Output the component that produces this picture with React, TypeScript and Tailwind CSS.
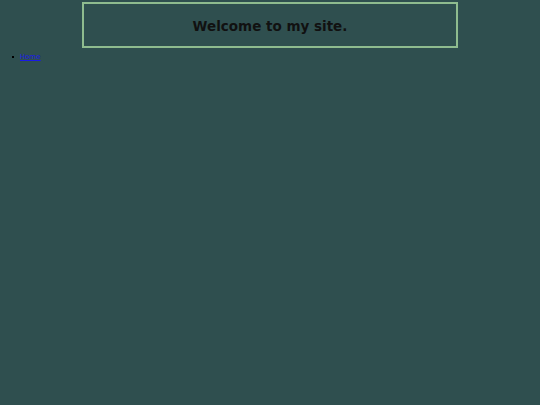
export default function App() {
  return (
    <div className="min-h-[405px] bg-[#2f4f4f] pt-[2px] font-['DejaVu_Sans',sans-serif]">
      <div className="mx-auto flex h-[46px] w-[376px] items-center justify-center border-2 border-[#8fbc8f] pt-[2px]">
        <h1 className="text-[13.5px] font-bold text-[#111]">Welcome to my site.</h1>
      </div>
      <ul className="mt-[4px] pl-[12px] text-[7px] leading-[10px]">
        <li className="flex items-center gap-[6px]">
          <span className="h-[2px] w-[2px] bg-black" />
          <a href="#" className="text-[#1a1ae6] underline">Home</a>
        </li>
      </ul>
    </div>
  )
}
